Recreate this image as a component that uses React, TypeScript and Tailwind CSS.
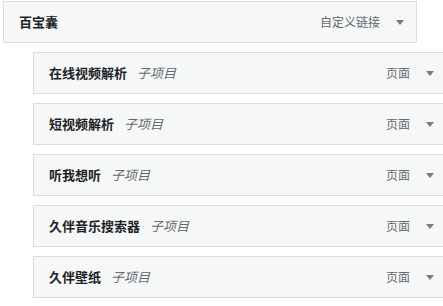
import React from "react";

const font = { fontFamily: '"Noto Sans CJK SC", "Noto Sans", sans-serif' };

function Arrow() {
  return (
    <svg width="8" height="5" viewBox="0 0 8 5" className="block">
      <polygon points="0,0 8,0 4,5" fill="#787c82" />
    </svg>
  );
}

function Item({ title, sub, type, child }: { title: string; sub?: string; type: string; child?: boolean }) {
  return (
    <div
      className={`w-[414px] shrink-0 border border-[#dcdcde] bg-[#f6f7f7] py-[10px] pl-[15px] pr-[12px] flex items-center ${child ? "ml-[33px]" : "ml-[3px]"}`}
    >
      <div className="flex items-center flex-1 leading-[20px]">
        <span className="text-[13px] font-semibold text-[#1d2327]">{title}</span>
        {sub && <span className="ml-[10px] text-[13px] italic text-[#646970]">{sub}</span>}
      </div>
      <span className="text-[12px] leading-[20px] text-[#646970]">{type}</span>
      <div className="w-[8px] ml-[16px] flex items-center">
        <Arrow />
      </div>
    </div>
  );
}

export default function App() {
  const children = ["在线视频解析", "短视频解析", "听我想听", "久伴音乐搜索器", "久伴壁纸"];
  return (
    <div className="w-[443px] h-[306px] overflow-hidden bg-white pt-px flex flex-col gap-[9px]" style={font}>
      <Item title="百宝囊" type="自定义链接" />
      {children.map((c) => (
        <Item key={c} title={c} sub="子项目" type="页面" child />
      ))}
    </div>
  );
}
